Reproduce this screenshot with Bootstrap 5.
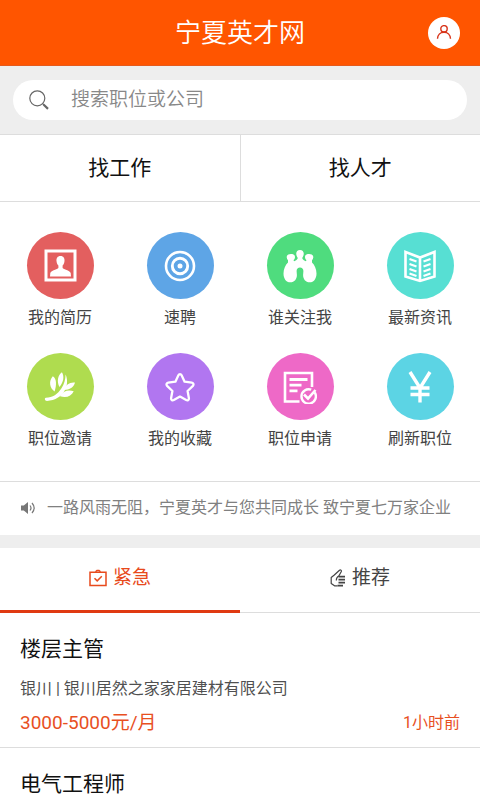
<!DOCTYPE html>
<html lang="zh-CN">
<head>
<meta charset="utf-8">
<meta name="viewport" content="width=device-width, initial-scale=1">
<title>宁夏英才网</title>
<link href="https://cdn.jsdelivr.net/npm/bootstrap@5.3.0/dist/css/bootstrap.min.css" rel="stylesheet">
<style>
body{font-family:Roboto,"Noto Sans CJK SC",sans-serif;font-weight:400;color:#333;overflow-x:hidden;font-size:16px;line-height:24px}
a{color:inherit;text-decoration:none}
svg{display:block;flex-shrink:0}
.topbar{background:#ff5500;color:#fff;height:66px;border-bottom:1px solid #e55a1c}
.topbar h1{font-size:26px;line-height:32px;font-weight:350}
.side{width:32px;height:32px}
.user-btn{background:#fff;color:#d8341a}
.search-zone{background:#eee;padding:14px 13px}
.search-pill{height:40px;background:#fff;gap:22px}
.search-pill input{font-size:19px;line-height:28px;font-weight:350;color:#555;padding:0;outline:0;background:none}
.search-pill input::placeholder{color:#888;opacity:1}
.line-t{border-top:1px solid #ddd}
.line-b{border-bottom:1px solid #ddd}
.role a{font-size:21px;line-height:32px;padding:17px 0;color:#111}
.role a:first-child{border-right:1px solid #ddd}
.shortcuts{padding:30px 0 28px;row-gap:21px}
.shortcuts a{gap:5px}
.disc{width:67px;height:67px;color:#fff}
.label-text{line-height:28px;color:#444}
.c-red{background:#e35f5f}.c-blue{background:#5ea5e6}.c-green{background:#4fdc7e}.c-teal{background:#57dfd3}
.c-lime{background:#afdc4f}.c-violet{background:#b176f0}.c-pink{background:#ee69c7}.c-cyan{background:#5cd4e4}
.notice{color:#808080;padding:14px 21px 15px;gap:12px}
.band{height:13px;background:#eee}
.job-tabs button{font-size:19px;line-height:28px;font-weight:400;background:none;color:#444;padding:16px 0 20px;gap:6px;border-bottom:1px solid #ddd}
.job-tabs button.active{color:#e84a1c;border-bottom:3px solid #e03a12;padding-bottom:18px}
.job{padding:20px 20px 10px}
.job h2{font-size:21px;line-height:32px;font-weight:400;color:#111;margin-bottom:12px}
.pay{font-size:19px;line-height:28px}
.hot{color:#e8501f}
.firm{color:#505050;margin-bottom:8px}
</style>
<script src="https://cdn.jsdelivr.net/npm/bootstrap@5.3.0/dist/js/bootstrap.bundle.min.js"></script>
</head>
<body class="bg-white">
<header class="topbar d-flex align-items-center justify-content-between px-3">
  <span class="side ms-1"></span>
  <h1 class="m-0">宁夏英才网</h1>
  <button type="button" class="side user-btn rounded-circle border-0 p-0 me-1 d-flex align-items-center justify-content-center" aria-label="个人中心">
    <svg width="16" height="16" viewBox="0 0 16 16" fill="none" stroke="currentColor" stroke-width="1.4"><circle cx="8" cy="3.800" r="3.200"/><path d="M1.500 13.800C1.700 9.700 4.400 7.200 8 7.200s6.300 2.500 6.500 6.600"/></svg>
  </button>
</header>
<form class="search-zone" role="search">
  <label class="search-pill rounded-pill d-flex align-items-center ps-3">
    <svg width="20" height="20" viewBox="0 0 20 20" fill="none" stroke="#666"><circle cx="8.300" cy="8.300" r="7.500" stroke-width="1.200"/><path d="M13.700 13.700l1.200 1.200" stroke-width="1.200"/><path d="M14.500 14.500l4.500 4.400" stroke-width="2.200"/></svg>
    <input type="search" class="border-0 flex-grow-1" placeholder="搜索职位或公司" aria-label="搜索职位或公司">
  </label>
</form>
<nav class="role row g-0 line-t line-b text-center">
  <a href="#jobs" class="col">找工作</a>
  <a href="#talent" class="col">找人才</a>
</nav>
<nav class="shortcuts row row-cols-4 g-0 line-b">
  <a href="#resume" class="col d-flex flex-column align-items-center">
    <span class="disc c-red rounded-circle d-flex align-items-center justify-content-center"><svg width="33" height="33" viewBox="0 0 33 33"><path d="M2 2h29v29H2z" fill="none" stroke="currentColor" stroke-width="3"/><path d="M16.500 7c-3 0-4.300 2.200-4 5 .2 2 .9 3.500 1.900 4.500v2.500c-1 1.700-6.900 2-8.100 5l-.3 3.500h21l-.3-3.500c-1.200-3-7.100-3.300-8.100-5v-2.500c1-1 1.700-2.500 1.900-4.500.3-2.800-1-5-4-5z" fill="currentColor"/></svg></span>
    <span class="label-text">我的简历</span>
  </a>
  <a href="#fast" class="col d-flex flex-column align-items-center">
    <span class="disc c-blue rounded-circle d-flex align-items-center justify-content-center"><svg width="32" height="32" viewBox="0 0 32 32" fill="none" stroke="currentColor"><circle cx="16" cy="16" r="14" stroke-width="2.600"/><circle cx="16" cy="16" r="7.700" stroke-width="2.900"/><circle cx="16" cy="16" r="2.500" fill="currentColor" stroke="none"/></svg></span>
    <span class="label-text">速聘</span>
  </a>
  <a href="#followers" class="col d-flex flex-column align-items-center">
    <span class="disc c-green rounded-circle d-flex align-items-center justify-content-center"><svg width="34" height="34" viewBox="0 0 34 34" fill="currentColor"><path d="M17 1c-2.700 0-4 1.900-3.700 4.200.1 1.400.7 2.500 1.300 3.300v1.300c-.7 1-2.100 1.900-3.400 2.400-.6-.3-.6-.6-.6-1.100.9-1 1.400-2 1.400-3.200C12 5.900 10.200 5 7.900 5 5.300 5 3.500 6.300 3.700 8.200c.1 1.300.6 2.300 1.300 3v2.200C2.500 15.700.5 20 .5 24.500c0 5.300 2.800 8.800 6.700 8.800 4.400 0 6.700-3.300 6.700-7.300 0-1.500-.3-2.800-.3-4 0-2.300 1.400-3.600 3.400-3.600s3.400 1.300 3.400 3.600c0 1.200-.3 2.500-.3 4 0 4 2.300 7.300 6.700 7.300 3.900 0 6.700-3.500 6.700-8.800 0-4.500-2-8.800-4.500-11.100v-2.200c.7-.7 1.200-1.700 1.300-3C30.500 6.300 28.700 5 26.100 5c-2.300 0-4.100.9-4.100 2.900 0 1.200.5 2.200 1.400 3.200 0 .5 0 .8-.6 1.100-1.300-.5-2.700-1.400-3.400-2.400V8.500c.6-.8 1.200-1.900 1.300-3.300C21 2.900 19.700 1 17 1z"/></svg></span>
    <span class="label-text">谁关注我</span>
  </a>
  <a href="#news" class="col d-flex flex-column align-items-center">
    <span class="disc c-teal rounded-circle d-flex align-items-center justify-content-center"><svg width="34" height="34" viewBox="0 0 34 34" fill="none" stroke="currentColor"><path d="M2.500 3L17 8.500 31.500 3v24.500L17 32 2.500 27.500zM17 8.500V32" stroke-width="2.600"/><path d="M6.500 10l7 2.500M6.500 15l7 2.500M6.500 20l7 2.500M6.500 24.500l7 2.500M27.500 10l-7 2.500M27.500 15l-7 2.500M27.500 20l-7 2.500M27.500 24.500l-7 2.500" stroke-width="2.100"/></svg></span>
    <span class="label-text">最新资讯</span>
  </a>
  <a href="#invites" class="col d-flex flex-column align-items-center">
    <span class="disc c-lime rounded-circle d-flex align-items-center justify-content-center"><svg width="32" height="32" viewBox="0 0 32 32" fill="currentColor"><path d="M1.800 26.700c7-.2 11.900-3.400 15.700-9.400 2.800-4.500 4-9.300 4.100-13.800 1.800 3.800 2.200 9.500-.1 14.600C18.300 25.300 11 29.900 3 29.900c-2.400 0-2.700-3-1.200-3.200z"/><path d="M8.800 5.200c3.900 2.400 3.900 8.500 1.800 15.300-4.900-3.400-6.200-10.500-1.800-15.300zM17.900 1.200c2.500 4 1.900 9.500-2.400 14.800-3-5.600-1.700-11.600 2.400-14.800zM31 11.500c-1.300 4.800-5.200 7.200-11 7.500 1.500-5.200 5.700-8.100 11-7.500zM16 25.300c2.600-5 7.700-6.800 13.700-5.100-2.400 5.200-7.300 6.900-13.700 5.100z"/></svg></span>
    <span class="label-text">职位邀请</span>
  </a>
  <a href="#favorites" class="col d-flex flex-column align-items-center">
    <span class="disc c-violet rounded-circle d-flex align-items-center justify-content-center"><svg width="30" height="30" viewBox="0 0 30 30" fill="none" stroke="currentColor" stroke-width="2.300" stroke-linejoin="round"><path d="M13.400 3.200c.7-1.500 2.500-1.500 3.200 0l3 6.500 7.200 1c1.700.3 2.200 2 1.100 3.200L22.600 19l1.300 7.200c.2 1.700-1.200 2.700-2.700 1.900L15 24.600l-6.200 3.500c-1.500.8-2.900-.2-2.700-1.900L7.400 19l-5.300-5.100c-1.100-1.200-.6-2.900 1.100-3.200l7.200-1z"/></svg></span>
    <span class="label-text">我的收藏</span>
  </a>
  <a href="#applications" class="col d-flex flex-column align-items-center">
    <span class="disc c-pink rounded-circle d-flex align-items-center justify-content-center"><svg width="34" height="34" viewBox="0 0 34 34" fill="none" stroke="currentColor"><path d="M29 17V3H2v28.500h14.500" stroke-width="2.600"/><path d="M6.500 9.500h18M6.500 15.200h12M6.500 20.800h8" stroke-width="2.800"/><path d="M31.700 22.500A7.200 7.200 0 1 1 28.200 19.700" stroke-width="2.400"/><path d="M21 24.500l4 4 7.500-8.500" stroke-width="2.600"/></svg></span>
    <span class="label-text">职位申请</span>
  </a>
  <a href="#refresh" class="col d-flex flex-column align-items-center">
    <span class="disc c-cyan rounded-circle d-flex align-items-center justify-content-center"><svg width="24" height="32" viewBox="0 0 24 32" fill="none" stroke="currentColor" stroke-width="3.400"><path d="M2 1l10 16L22 1M12 16v15.500M2.500 17h19M2.500 23.500h19"/></svg></span>
    <span class="label-text">刷新职位</span>
  </a>
</nav>
<div class="notice d-flex align-items-center text-nowrap">
  <svg width="14" height="14" viewBox="0 0 14 14"><path d="M0 4.500h2.800L7 1v12L2.800 9.500H0z" fill="#777"/><path d="M9 4.500c1.200 1.500 1.200 3.500 0 5M11 2c2.600 3 2.600 7 0 10" fill="none" stroke="#777" stroke-width="1.200"/></svg>
  <span>一路风雨无阻，宁夏英才与您共同成长 致宁夏七万家企业</span>
</div>
<div class="band"></div>
<div class="job-tabs row g-0" role="tablist">
  <button type="button" role="tab" aria-selected="true" class="active col border-top-0 border-start-0 border-end-0 d-flex align-items-center justify-content-center">
    <svg width="18" height="18" viewBox="0 0 18 18" fill="none" stroke="currentColor" stroke-width="1.500"><path d="M1 3.200h16v13.300H1z"/><path d="M6.500 2.800L8 1.500h2l1.500 1.300"/><path d="M5.500 9.200l2.700 2.700 4.600-4.600"/></svg>
    <span>紧急</span>
  </button>
  <button type="button" role="tab" aria-selected="false" class="col border-top-0 border-start-0 border-end-0 d-flex align-items-center justify-content-center">
    <svg width="16" height="18" viewBox="0 0 16 18" fill="none" stroke="currentColor" stroke-width="1.200" stroke-linejoin="round"><path d="M7.500 16.800H4.500L1.200 14.500V8.500L4 6.200 9.500 1.200c1-.8 2.300.2 1.700 1.500L8.800 7C7 7.800 6.300 9 6.300 11.500"/><path d="M8.500 7.700H15M8.500 10.700H15M8.500 13.700H15M7.500 16.700H13" stroke-width="1.700"/></svg>
    <span>推荐</span>
  </button>
</div>
<main>
  <article class="job line-b">
    <h2>楼层主管</h2>
    <p class="firm">银川 | 银川居然之家家居建材有限公司</p>
    <div class="d-flex align-items-center justify-content-between hot"><span class="pay">3000-5000元/月</span><time>1小时前</time></div>
  </article>
  <article class="job pb-0">
    <h2 class="mb-0">电气工程师</h2>
  </article>
</main>
</body>
</html>
